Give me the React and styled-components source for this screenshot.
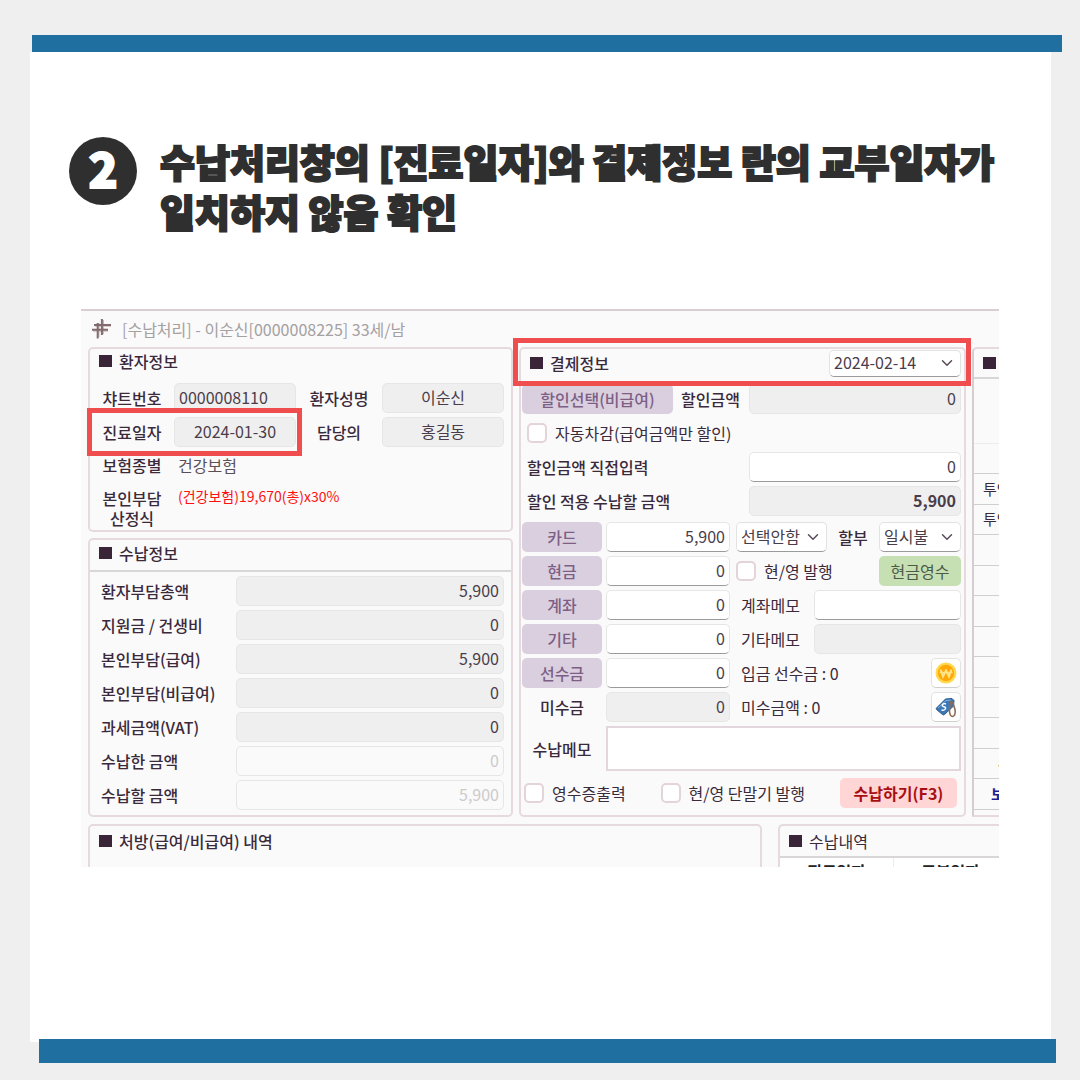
import React, { useState } from 'react'
import styled, { createGlobalStyle } from 'styled-components'
import { ChevronDown } from 'lucide-react'

const GlobalStyle = createGlobalStyle`
  * {
    box-sizing: border-box;
  }
  body {
    margin: 0;
    background: #efefef;
    color: #3a2a3c;
    font-family: "Noto Sans CJK KR", sans-serif;
    font-size: 16px;
    line-height: 20px;
  }
  button, input, select, textarea {
    font: inherit;
    color: inherit;
    margin: 0;
  }
`

const Page = styled.div`
  min-height: 100vh;
  display: flex;
  flex-direction: column;
  padding: 35px 0 17px;
`

const TopBar = styled.div`
  height: 17px;
  margin: 0 18px 0 32px;
  background: #206fa1;
`

const BottomBar = styled.div`
  height: 24px;
  margin: -3px 24px 0 39px;
  background: #206fa1;
`

const Sheet = styled.main`
  flex: 1;
  margin: 0 29px 0 30px;
  padding: 84px 52px 0 51px;
  background: #fff;
`

const Heading = styled.header`
  display: flex;
  gap: 23px;
  margin: 0 0 73px -12px;
`

const StepNumber = styled.span`
  display: flex;
  align-items: center;
  justify-content: center;
  flex: none;
  width: 68px;
  height: 68px;
  margin-top: 1px;
  padding-bottom: 8px;
  border-radius: 50%;
  background: #2f2f2f;
  color: #fff;
  font-size: 48px;
  font-weight: 900;
  -webkit-text-stroke: 2px #fff;
`

const Title = styled.h1`
  margin: 0;
  color: #2f2f2f;
  font-size: 38px;
  font-weight: 900;
  line-height: 50px;
  -webkit-text-stroke: 2px #2f2f2f;
`

const Window = styled.section`
  overflow: hidden;
  border-top: 2px solid #dacdd3;
  background: #fafafa;
`

const TitleBar = styled.div`
  display: flex;
  align-items: center;
  gap: 10px;
  height: 36px;
  padding-left: 11px;
  color: #a5a0a2;
`

const Columns = styled.div`
  display: grid;
  grid-template-columns: 425fr 447fr 27fr;
  gap: 6px;
  padding-left: 7px;
`

const Stack = styled.div`
  display: flex;
  flex-direction: column;
  gap: 6px;
  min-width: 0;
`

const Panel = styled.section`
  min-width: 0;
  border: 2px solid #e6dade;
  border-radius: 5px;
`

const PanelHead = styled.div`
  position: relative;
  display: flex;
  align-items: center;
  justify-content: space-between;
  height: ${p => p.$height}px;
  padding: 0 3px ${p => p.$lift || 0}px 9px;
  border-bottom: ${p => (p.$line ? '2px solid #d9d6d8' : 'none')};
`

const PanelTitle = styled.h2`
  display: flex;
  align-items: center;
  gap: 7px;
  margin: 0;
  font-size: 16px;
  font-weight: ${p => (p.$light ? 400 : 500)};
  white-space: nowrap;

  &::before {
    content: '';
    flex: none;
    width: 13px;
    height: 12px;
    background: #3a2438;
  }
`

// red frame laid over the part the reader should compare
const Marker = styled.span`
  position: absolute;
  inset: ${p => p.$inset};
  z-index: 1;
  border: 5px solid #f04d4f;
  pointer-events: none;
`

const PatientGrid = styled.div`
  display: grid;
  grid-template-columns: 84px 122px 1fr 122px;
  row-gap: 4px;
  align-items: center;
  margin-top: 8px;
  padding-right: 7px;
`

const PatientPair = styled.div`
  position: relative;
  display: grid;
  grid-template-columns: subgrid;
  grid-column: span 2;
  align-items: center;
`

const PatientLabel = styled.label`
  font-weight: 500;
  text-align: center;
`

const Insurance = styled.dl`
  display: grid;
  grid-template-columns: 84px 1fr;
  margin: 0;
  padding: 8px 0 2px;

  dt {
    font-weight: 500;
    text-align: center;
  }
  dd {
    margin: 0;
    padding-left: 4px;
    color: #5a5058;
  }
  .formula-name {
    padding-top: 13px;
  }
  .formula {
    padding-top: 11px;
    color: #ff1010;
    font-size: 14px;
  }
`

const Input = styled.input`
  min-width: 0;
  width: 100%;
  height: 30px;
  padding: 0 4px 2px;
  border: 1px solid #e6e6e6;
  border-bottom-color: ${p => (p.$plain || p.readOnly ? '#e6e6e6' : '#9a9a9a')};
  border-radius: 5px;
  background: ${p => (p.$plain ? '#fafafa' : p.readOnly ? '#efefef' : '#fff')};
  color: ${p => (p.$plain ? '#cdcacc' : '#4a3d4a')};
  font-weight: ${p => (p.$bold ? 700 : 400)};
  text-align: ${p => p.$align || 'right'};
  outline: none;
`

const Fees = styled.div`
  display: flex;
  flex-direction: column;
  gap: 4px;
  padding: 4px 7px 5px 11px;
`

const FeeRow = styled.div`
  display: grid;
  grid-template-columns: 135px 1fr;
  align-items: center;
`

const Label = styled.label`
  font-weight: ${p => (p.$light ? 400 : 500)};
  text-align: ${p => (p.$center ? 'center' : 'left')};
  white-space: nowrap;
`

const PayBody = styled.div`
  display: flex;
  flex-direction: column;
  gap: 4px;
  padding: 0 3px 7px 1px;
`

const DiscountRow = styled.div`
  display: grid;
  grid-template-columns: 1fr 212px;
  align-items: center;
  height: 30px;

  > label {
    padding-left: 5px;
  }
`

const DiscountPick = styled.div`
  display: grid;
  grid-template-columns: 151px 1fr;
  align-items: center;
  gap: 8px;
`

const Button = styled.button`
  height: 30px;
  width: ${p => (p.$width ? p.$width + 'px' : 'auto')};
  padding: 0;
  border: 0;
  border-radius: 5px;
  background: ${p => p.$bg || '#dacfde'};
  color: ${p => p.$ink || '#7d5f86'};
  font-weight: ${p => p.$weight || 500};
  cursor: pointer;
`

const CheckLabel = styled.label`
  display: flex;
  align-items: center;
  gap: 8px;
  white-space: nowrap;
`

const CheckBox = styled.input.attrs({ type: 'checkbox' })`
  appearance: none;
  flex: none;
  width: 20px;
  height: 20px;
  border: 2px solid #e3d3da;
  border-radius: 5px;
  background: #fff;

  &:checked {
    background: #7d5f86;
  }
`

const PayGrid = styled.div`
  display: grid;
  grid-template-columns: 80px 124px 1fr;
  gap: 4px;
  align-items: center;
  margin-top: 2px;
`

const PayExtra = styled.div`
  display: flex;
  align-items: center;
  justify-content: space-between;
  height: 30px;
  padding-left: ${p => (p.$text ? 7 : 2)}px;

  > ${Input} {
    width: 147px;
  }
`

const Memo = styled.textarea`
  grid-column: 2 / 4;
  display: block;
  width: 100%;
  height: 45px;
  border: 2px solid #e3d6dc;
  border-radius: 0;
  background: #fff;
  resize: none;
  outline: none;
`

const SelectWrap = styled.span`
  position: relative;
  display: inline-flex;
  width: ${p => p.$width}px;

  svg {
    position: absolute;
    top: 50%;
    right: 5px;
    transform: translateY(-50%);
    pointer-events: none;
  }
`

const SelectBox = styled.select`
  appearance: none;
  width: 100%;
  height: ${p => p.$height}px;
  padding: 0 4px 2px;
  border: 1px solid #e2e2e2;
  border-bottom-color: #9a9a9a;
  border-radius: 5px;
  background: #fff;
  color: #4a3d4a;
  outline: none;
`

const IconButton = styled.button`
  display: flex;
  align-items: center;
  justify-content: center;
  width: 30px;
  height: 30px;
  padding: 0;
  border: 1px solid #e2e2e2;
  border-bottom-color: #cfcfcf;
  border-radius: 5px;
  background: #fff;
`

const SubmitRow = styled.div`
  display: flex;
  align-items: center;
  justify-content: space-between;
  margin-top: 3px;
  padding: 0 4px 0 2px;
`

const SidePanel = styled(Panel)`
  display: flex;
  flex-direction: column;
  overflow: hidden;
  border-right: 0;
  border-radius: 5px 0 0 0;
  border-left-color: #d4ced1;
`

const SideBlank = styled.div`
  height: ${p => p.$height}px;
  border-bottom: 1px solid ${p => p.$line};
`

const SideList = styled.ul`
  flex: 1;
  display: flex;
  flex-direction: column;
  margin: 0;
  padding: 0 0 5px;
  list-style: none;
`

const SideItem = styled.li`
  flex: 1;
  display: flex;
  align-items: center;
  padding-left: ${p => p.$indent || 9}px;
  border-bottom: 1px solid #cfcfcf;
  color: ${p => p.$ink || '#3a2a3c'};
  font-size: 15px;
  font-weight: ${p => (p.$ink ? 700 : 400)};
  white-space: nowrap;
`

const Lower = styled.div`
  display: grid;
  grid-template-columns: 674fr 221fr;
  gap: 16px;
  height: 43px;
  margin-top: 7px;
  padding-left: 7px;
  overflow: hidden;
`

const LowerPanel = styled(Panel)`
  height: 120px;
  overflow: hidden;
  border-right-width: ${p => (p.$cut ? 0 : 2)}px;
  border-radius: ${p => (p.$cut ? '5px 0 0 0' : '5px')};
`

const History = styled.table`
  width: 228px;
  border-collapse: collapse;
  background: #fff;

  th {
    width: 114px;
    padding: 3px 0;
    border-right: 1px solid #ececec;
    color: #222;
    font-weight: 700;
  }
`

function Mark() {
  return (
    <svg width="20" height="20" viewBox="0 0 20 20" fill="none">
      <path d="M7 4v14M11.500 1v14M3 7.200h16M1 12.200h15" stroke="#c9b8ba" strokeWidth="1" />
      <path d="M5.700 4v15.500M9.900 0v16" stroke="#826a6e" strokeWidth="2" />
      <path d="M2 6h17M0 10.800h16" stroke="#826a6e" strokeWidth="2" />
    </svg>
  )
}

function Coin() {
  return (
    <svg width="22" height="22" viewBox="0 0 22 22">
      <circle cx="11" cy="11" r="10.5" fill="#ffd94f" />
      <circle cx="11" cy="11" r="8.200" fill="#ffa808" />
      <path d="M5.500 7.500l2.500 7 3-6 3 6 2.500-7" fill="none" stroke="#ffe488" strokeWidth="2" />
      <path d="M4.500 10.500h13" stroke="#ffe488" strokeWidth="1.400" />
    </svg>
  )
}

function Tag() {
  return (
    <svg width="22" height="22" viewBox="0 0 22 22" fill="none">
      <path d="M1.500 12L10.500 3l6.500-.5 2 2-.5 5.500-9 8.500q-1 .8-2 0l-6-5q-.7-.8 0-1.500z" fill="#3c78b8" stroke="#2c5788" />
      <path d="M3 12l8-7.500 5-.5" stroke="#7fb0e0" />
      <path d="M11 8q-2.500-1-3.500.6t1.500 2.200 1.200 2.300-3.700.9" stroke="#fff" strokeWidth="1.400" />
      <path d="M16.500 4.500q-2.500 6-2 11t3 5q3.500-1 2.500-7l-2.500-8" stroke="#8d6c55" strokeWidth="1.600" />
    </svg>
  )
}

function Select({ label, id, options, width, height = 30 }) {
  return (
    <SelectWrap $width={width}>
      <SelectBox id={id} aria-label={label} $height={height}>
        {options.map(o => <option key={o}>{o}</option>)}
      </SelectBox>
      <ChevronDown size={18} color="#5a4a5a" strokeWidth={2} />
    </SelectWrap>
  )
}

function PatientField({ id, label, value, align = 'center', marked }) {
  return (
    <PatientPair>
      <PatientLabel htmlFor={id}>{label}</PatientLabel>
      <Input id={id} readOnly value={value} $align={align} />
      {marked && <Marker $inset="-9px -6px -9px -3px" />}
    </PatientPair>
  )
}

const fees = [
  { id: 'total', label: '환자부담총액', value: '5,900' },
  { id: 'support', label: '지원금 / 건생비', value: '0' },
  { id: 'covered', label: '본인부담(급여)', value: '5,900' },
  { id: 'uncovered', label: '본인부담(비급여)', value: '0' },
  { id: 'vat', label: '과세금액(VAT)', value: '0' },
  { id: 'paid', label: '수납한 금액', value: '0', plain: true },
  { id: 'due', label: '수납할 금액', value: '5,900', plain: true },
]

const sideItems = [
  { text: '투약' },
  { text: '투약' },
  {}, {}, {}, {}, {}, {}, {},
  { text: '-', ink: '#e03030', indent: 24 },
  { text: '보험', ink: '#1c1c94', indent: 17 },
]

const startAmounts = { card: '5,900', cash: '0', account: '0', etc: '0', prepaid: '0', direct: '0' }

function App() {
  const [amounts, setAmounts] = useState(startAmounts)
  const change = e => setAmounts({ ...amounts, [e.target.name]: e.target.value })

  const amount = (name, label) => (
    <Input name={name} aria-label={label} value={amounts[name]} onChange={change} />
  )

  return (
    <Page>
      <GlobalStyle />
      <TopBar />
      <Sheet>
        <Heading>
          <StepNumber>2</StepNumber>
          <Title>
            수납처리창의 [진료일자]와 결제정보 란의 교부일자가<br />
            일치하지 않음 확인
          </Title>
        </Heading>

        <Window>
          <TitleBar>
            <Mark />
            <span>[수납처리] - 이순신[0000008225] 33세/남</span>
          </TitleBar>

          <Columns>
            <Stack>
              <Panel>
                <PanelHead $height={26} $lift={3}>
                  <PanelTitle>환자정보</PanelTitle>
                </PanelHead>
                <PatientGrid>
                  <PatientField id="chart" label="챠트번호" value="0000008110" align="left" />
                  <PatientField id="name" label="환자성명" value="이순신" />
                  <PatientField id="date" label="진료일자" value="2024-01-30" marked />
                  <PatientField id="doctor" label="담당의" value="홍길동" />
                </PatientGrid>
                <Insurance>
                  <dt>보험종별</dt>
                  <dd>건강보험</dd>
                  <dt className="formula-name">본인부담<br />산정식</dt>
                  <dd className="formula">(건강보험)19,670(총)x30%</dd>
                </Insurance>
              </Panel>

              <Panel>
                <PanelHead $height={32} $lift={5} $line>
                  <PanelTitle>수납정보</PanelTitle>
                </PanelHead>
                <Fees>
                  {fees.map(f => (
                    <FeeRow key={f.id}>
                      <Label htmlFor={f.id}>{f.label}</Label>
                      <Input id={f.id} readOnly value={f.value} $plain={f.plain} />
                    </FeeRow>
                  ))}
                </Fees>
              </Panel>
            </Stack>

            <Panel>
              <PanelHead $height={35} $lift={7}>
                <PanelTitle>결제정보</PanelTitle>
                <Select label="교부일자" options={['2024-02-14']} width={132} height={27} />
                <Marker $inset="-11px -7px -2px -8px" />
              </PanelHead>
              <PayBody>
                <DiscountRow>
                  <DiscountPick>
                    <Button type="button">할인선택(비급여)</Button>
                    <Label htmlFor="discount">할인금액</Label>
                  </DiscountPick>
                  <Input id="discount" readOnly value="0" />
                </DiscountRow>
                <DiscountRow>
                  <CheckLabel><CheckBox />자동차감(급여금액만 할인)</CheckLabel>
                </DiscountRow>
                <DiscountRow>
                  <Label htmlFor="direct">할인금액 직접입력</Label>
                  <Input id="direct" name="direct" value={amounts.direct} onChange={change} />
                </DiscountRow>
                <DiscountRow>
                  <Label htmlFor="after">할인 적용 수납할 금액</Label>
                  <Input id="after" readOnly value="5,900" $bold />
                </DiscountRow>

                <PayGrid>
                  <Button type="button">카드</Button>
                  {amount('card', '카드')}
                  <PayExtra>
                    <Select label="카드 선택" options={['선택안함']} width={91} />
                    <Label htmlFor="months">할부</Label>
                    <Select id="months" options={['일시불']} width={82} />
                  </PayExtra>

                  <Button type="button">현금</Button>
                  {amount('cash', '현금')}
                  <PayExtra>
                    <CheckLabel><CheckBox />현/영 발행</CheckLabel>
                    <Button type="button" $bg="#c6e0b4" $ink="#4c5a48" $weight={400} $width={82}>현금영수</Button>
                  </PayExtra>

                  <Button type="button">계좌</Button>
                  {amount('account', '계좌')}
                  <PayExtra $text>
                    <Label htmlFor="accountMemo" $light>계좌메모</Label>
                    <Input id="accountMemo" $align="left" />
                  </PayExtra>

                  <Button type="button">기타</Button>
                  {amount('etc', '기타')}
                  <PayExtra $text>
                    <Label htmlFor="etcMemo" $light>기타메모</Label>
                    <Input id="etcMemo" readOnly $align="left" />
                  </PayExtra>

                  <Button type="button">선수금</Button>
                  {amount('prepaid', '선수금')}
                  <PayExtra $text>
                    <span>입금 선수금 : 0</span>
                    <IconButton type="button" aria-label="선수금"><Coin /></IconButton>
                  </PayExtra>

                  <Label htmlFor="unpaid" $center>미수금</Label>
                  <Input id="unpaid" readOnly value="0" />
                  <PayExtra $text>
                    <span>미수금액 : 0</span>
                    <IconButton type="button" aria-label="미수금"><Tag /></IconButton>
                  </PayExtra>

                  <Label htmlFor="memo" $center>수납메모</Label>
                  <Memo id="memo" />
                </PayGrid>

                <SubmitRow>
                  <CheckLabel><CheckBox />영수증출력</CheckLabel>
                  <CheckLabel><CheckBox />현/영 단말기 발행</CheckLabel>
                  <Button type="button" $bg="#ffd5d5" $ink="#a80f14" $weight={700} $width={117}>수납하기(F3)</Button>
                </SubmitRow>
              </PayBody>
            </Panel>

            <SidePanel>
              <PanelHead $height={30} $line>
                <PanelTitle />
              </PanelHead>
              <SideBlank $height={65} $line="#ececec" />
              <SideBlank $height={30} $line="#cfcfcf" />
              <SideList>
                {sideItems.map((s, i) => (
                  <SideItem key={i} $ink={s.ink} $indent={s.indent}>{s.text}</SideItem>
                ))}
              </SideList>
            </SidePanel>
          </Columns>

          <Lower>
            <LowerPanel>
              <PanelHead $height={30}>
                <PanelTitle>처방(급여/비급여) 내역</PanelTitle>
              </PanelHead>
            </LowerPanel>
            <LowerPanel $cut>
              <PanelHead $height={32} $line>
                <PanelTitle $light>수납내역</PanelTitle>
              </PanelHead>
              <History>
                <thead>
                  <tr>
                    <th scope="col">진료일자</th>
                    <th scope="col">교부일자</th>
                  </tr>
                </thead>
              </History>
            </LowerPanel>
          </Lower>
        </Window>
      </Sheet>
      <BottomBar />
    </Page>
  )
}

export default App
